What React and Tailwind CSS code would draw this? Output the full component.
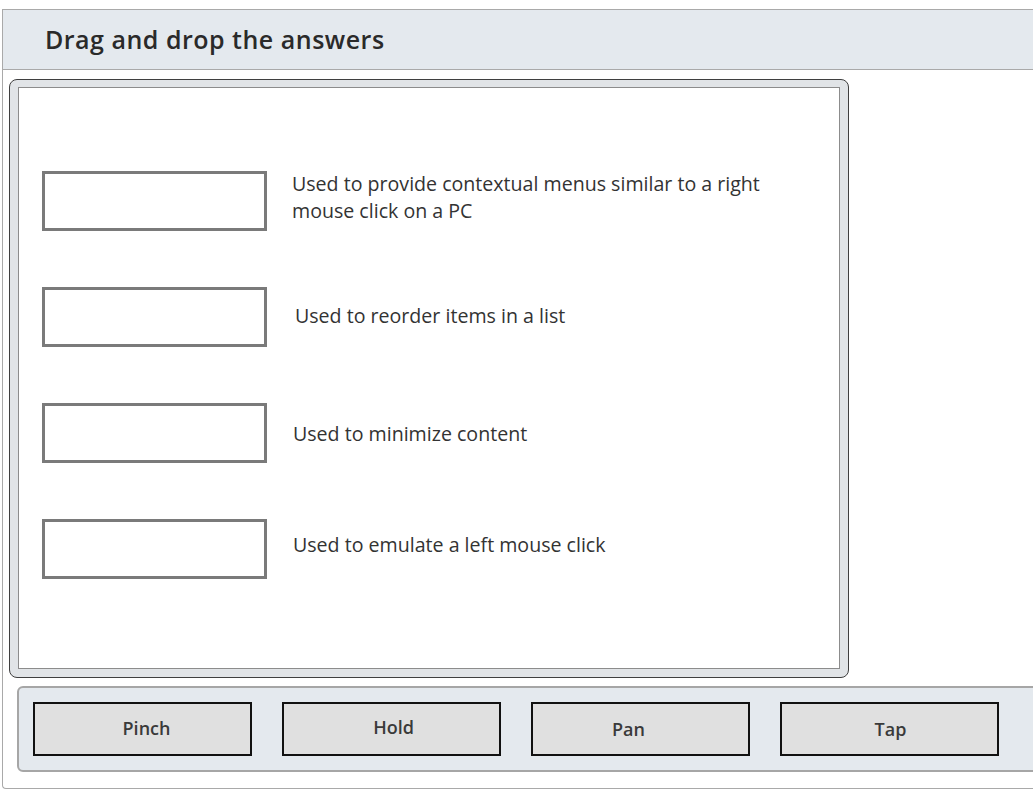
const rows = [
  { lines: ['Used to provide contextual menus similar to a right', 'mouse click on a PC'], dx: 'ml-[25px]', dy: '-mt-[8px]' },
  { lines: ['Used to reorder items in a list'], dx: 'ml-[28px]', dy: '-mt-[4px]' },
  { lines: ['Used to minimize content'], dx: 'ml-[26px]', dy: 'mt-[1px]' },
  { lines: ['Used to emulate a left mouse click'], dx: 'ml-[26px]', dy: '-mt-[10px]' },
];

// label nudges follow the original screenshot, where the labels are not perfectly centred
const answers = [
  { label: 'Pinch', nudge: 'pl-[8px] pb-[2px]' },
  { label: 'Hold', nudge: 'pl-[4px] pb-[4px]' },
  { label: 'Pan', nudge: 'pr-[24px] pt-[1px]' },
  { label: 'Tap', nudge: 'pl-[2px] pb-[0px]' },
];

function DropRow({ row }) {
  return (
    <div className="flex items-center h-[60px]">
      <div className="w-[225px] h-[60px] border-[3px] border-[#7a7a7a] bg-white shrink-0" />
      <div
        className={`${row.dx} ${row.dy} text-[19.6px] leading-[27px] text-[#333]`}
        style={{ fontFamily: '"Open Sans", "Noto Sans", sans-serif' }}
      >
        {row.lines.map((l) => (
          <div key={l}>{l}</div>
        ))}
      </div>
    </div>
  );
}

export default function App() {
  return (
    <div className="w-[1033px] h-[791px] bg-white overflow-hidden pt-[9px]">
      <div className="ml-[2px] w-[1060px] h-[780px] border-l border-t border-b border-[#a9a9a9] rounded-bl-[4px]">
        {/* Header */}
        <div className="h-[60px] bg-[#e4e9ee] border-b border-[#a9a9a9] flex items-center pl-[42px]">
          <h1
            className="text-[25px] font-semibold text-[#2a2a2a] tracking-[0.5px]"
            style={{ fontFamily: '"Open Sans", "Noto Sans", sans-serif' }}
          >
            Drag and drop the answers
          </h1>
        </div>

        {/* Question image frame */}
        <div className="ml-[6px] mt-[9px] w-[840px] h-[599px] rounded-[8px] border border-[#3f3f3f] bg-[#e1e4e7] pt-[7px] px-[8px] pb-[8px]">
          <div className="w-full h-full bg-white border border-[#8c8c8c] pl-[23px] pt-[83px] flex flex-col gap-[56px]">
            {rows.map((r, i) => (
              <DropRow key={i} row={r} />
            ))}
          </div>
        </div>

        {/* Answer bar */}
        <div className="ml-[14px] mt-[8px] w-[1040px] h-[86px] bg-[#e4e9ee] border-2 border-[#a6a6a6] rounded-l-[6px] pl-[14px] pt-[14px] flex gap-[30px]">
          {answers.map((a) => (
            <button
              key={a.label}
              className={`w-[219px] h-[54px] bg-[#e0e0e0] border-2 border-[#111] text-[18px] font-semibold text-[#3a3a3a] flex items-center justify-center ${a.nudge}`}
              style={{ fontFamily: '"Open Sans", "Noto Sans", sans-serif' }}
            >
              {a.label}
            </button>
          ))}
        </div>
      </div>
    </div>
  );
}
